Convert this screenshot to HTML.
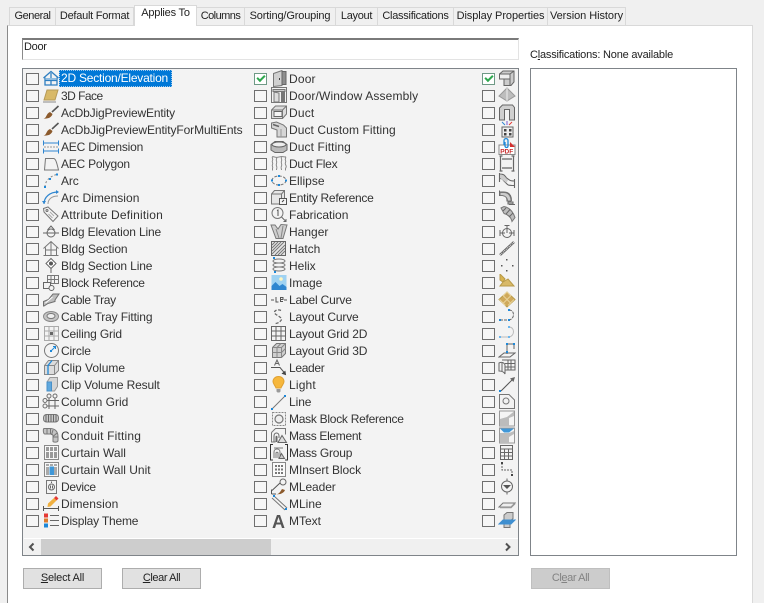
<!DOCTYPE html>
<html><head><meta charset="utf-8"><style>
html,body{margin:0;padding:0;width:764px;height:603px;overflow:hidden}
body{position:relative;background:#f0f0f0;font:11px "Liberation Sans",sans-serif;color:#2b2b2b}
.a{position:absolute;box-sizing:border-box}
.panel{left:7px;top:25px;width:746px;height:578px;background:#fff;border:1px solid #d9d9d9;border-left:1px solid #8a8a8a;border-bottom:0}
.t{position:absolute;box-sizing:border-box;top:7px;height:19px;background:#f0f0f0;border:1px solid #d9d9d9;border-left:0;line-height:16px;text-align:center;white-space:nowrap;color:#222}
.t.on{top:5px;height:21px;background:#fff;border-left:1px solid #d9d9d9;border-bottom:0;line-height:15px;z-index:2}
.list{left:22px;top:68px;width:497px;height:488px;background:#f3f3f3;border:1px solid #7f8489;overflow:hidden}
.col{position:absolute;top:1px;width:228px}
.r{position:relative;height:17px;white-space:nowrap}
.r i{position:absolute;left:3px;top:3px;width:13px;height:12px;box-sizing:border-box;border:1px solid #6f6f6f;background:#f6f6f6}
.r svg{position:absolute;left:19px;top:0;width:18px;height:17px;fill:none;stroke:#6e6e6e;stroke-width:1}
.r span{position:absolute;left:38px;top:1px;line-height:16px;color:#333;font-size:12px}
.ck{border-color:#6f9a86!important;background:#fff!important}
.ck:after{content:"";position:absolute;left:2px;top:1px;width:6px;height:3px;border-left:2px solid #2ea84e;border-bottom:2px solid #2ea84e;transform:rotate(-45deg)}
.sel{left:36px!important;top:0!important;width:113px;height:17px;line-height:16px;padding-left:2px;box-sizing:border-box;background:#0078d7;color:#fff!important;outline:1px dotted #9cc8ee;outline-offset:-1px;overflow:hidden}
.btn{top:568px;width:79px;height:21px;background:#e1e1e1;border:1px solid #adadad;text-align:center;line-height:19px;color:#222}
.sb{left:1px;top:469px;width:495px;height:17px;background:#f0f0f0;border-top:1px solid #fff}
u{text-decoration:underline}
</style></head><body>
<div class="a panel"></div>
<div class="t" style="left:9px;width:47px;border-left:1px solid #d9d9d9;letter-spacing:-.45px">General</div>
<div class="t" style="left:56px;width:78px;letter-spacing:-.25px">Default Format</div>
<div class="t on" style="left:134px;width:63px;letter-spacing:-.2px">Applies To</div>
<div class="t" style="left:197px;width:48px;letter-spacing:-.55px">Columns</div>
<div class="t" style="left:245px;width:91px;letter-spacing:-.15px">Sorting/Grouping</div>
<div class="t" style="left:336px;width:42px;letter-spacing:-.3px">Layout</div>
<div class="t" style="left:378px;width:76px;letter-spacing:-.27px">Classifications</div>
<div class="t" style="left:454px;width:94px;letter-spacing:-.08px">Display Properties</div>
<div class="t" style="left:548px;width:78px;letter-spacing:-.06px">Version History</div>

<div class="a" style="left:22px;top:38px;width:497px;height:22px;background:#fff;border:1px solid #e3e3e3;border-top:2px solid #7a7a7a;border-left:1px solid #8a8a8a;padding-left:1px;line-height:15px;color:#222;letter-spacing:-.3px">Door</div>
<div class="a" style="left:530px;top:47px;line-height:16px;color:#222;letter-spacing:-.2px">C<u>l</u>assifications: None available</div>
<div class="a" style="left:530px;top:68px;width:207px;height:488px;background:#fff;border:1px solid #7f8489"></div>

<div class="a list">
<div class="col" style="left:0">
<div class="r"><i></i><svg viewBox="0 0 18 17"><path d="M1.500 8L9 1.500 16.500 8M3 7.500v7.500h12V7.500M3 10.500h12M9 3v12" stroke="#2f7fc1" stroke-width="1.300"/><path d="M4 8h10v2H4z" fill="#8dbbe0" stroke="none"/></svg><span class="sel" style="letter-spacing:-.22px">2D Section/Elevation</span></div>
<div class="r"><i></i><svg viewBox="0 0 18 17"><path d="M5 3h11l-3 10H2z" fill="#d8b968" stroke="#b59a58"/><path d="M1 15h13" stroke="#888"/></svg><span style="letter-spacing:-.53px">3D Face</span></div>
<div class="r"><i></i><svg viewBox="0 0 18 17"><path d="M16.500 2L10 8" stroke="#555" stroke-width="1.600"/><path d="M1.500 14.500c3 0 2.500-5 6.500-6.500l2.500 2c-1 3.500-4.500 5-9 4.500z" fill="#8c5a2c" stroke="none"/></svg><span style="letter-spacing:-.17px">AcDbJigPreviewEntity</span></div>
<div class="r"><i></i><svg viewBox="0 0 18 17"><path d="M16.500 2L10 8" stroke="#555" stroke-width="1.600"/><path d="M1.500 14.500c3 0 2.500-5 6.500-6.500l2.500 2c-1 3.500-4.500 5-9 4.500z" fill="#8c5a2c" stroke="none"/></svg><span style="letter-spacing:-.1px">AcDbJigPreviewEntityForMultiEnts</span></div>
<div class="r"><i></i><svg viewBox="0 0 18 17"><path d="M1.500 5h15M1.500 13h15M1.500 2.500v5M16.500 2.500v5M1.500 10.500v5M16.500 10.500v5" stroke="#2f86d0"/><path d="M2 9h14" stroke="#999" stroke-dasharray="2 1"/></svg><span style="letter-spacing:-.2px">AEC Dimension</span></div>
<div class="r"><i></i><svg viewBox="0 0 18 17"><path d="M2.500 15L3.500 3.500h8c2 0 3 3 5 11.500z" stroke="#777"/></svg><span style="letter-spacing:-.23px">AEC Polygon</span></div>
<div class="r"><i></i><svg viewBox="0 0 18 17"><path d="M3 15C3 9 8 4 15 2.500" stroke="#888" stroke-dasharray="2 2"/><path d="M2 14h2v2H2zM7 6h2v2H7zM14 1.500h2v2h-2z" fill="#1e88d8" stroke="none"/></svg><span style="letter-spacing:-.1px">Arc</span></div>
<div class="r"><i></i><svg viewBox="0 0 18 17"><path d="M2 15C2 8 8 3 16 3" stroke="#2f86d0" stroke-width="1.200"/><path d="M6 15c0-5 4-8 10-8" stroke="#999"/><path d="M0 12h4l-2 3zM14 1l3 2-3 2z" fill="#2f86d0" stroke="none"/></svg><span style="letter-spacing:.03px">Arc Dimension</span></div>
<div class="r"><i></i><svg viewBox="0 0 18 17"><path d="M1.500 2.500L6 1l10 9-5 5.500L2 6z" stroke="#777"/><circle cx="5" cy="4.500" r="1"/><path d="M8 6l4 4M6.500 8l4 4" stroke="#aaa"/></svg><span style="letter-spacing:.2px">Attribute Definition</span></div>
<div class="r"><i></i><svg viewBox="0 0 18 17"><path d="M1 10h16" stroke="#666"/><circle cx="9" cy="10" r="4" stroke="#666"/><path d="M5.500 7L9 3l3.500 4" stroke="#666"/></svg><span style="letter-spacing:-.14px">Bldg Elevation Line</span></div>
<div class="r"><i></i><svg viewBox="0 0 18 17"><path d="M1.500 8.500L9 1.500l7.500 7M3.500 7.500v8M14.500 7.500v8M9 2v13.500M3.500 10h11M1.500 15.500h15" stroke="#777"/></svg><span style="letter-spacing:-.07px">Bldg Section</span></div>
<div class="r"><i></i><svg viewBox="0 0 18 17"><path d="M9 1.500L14 6.500 9 11.500 4 6.500z" fill="#fff" stroke="#666"/><circle cx="9" cy="6.500" r="2" fill="#555" stroke="none"/><path d="M9 11.500V16" stroke="#666"/></svg><span style="letter-spacing:-.12px">Bldg Section Line</span></div>
<div class="r"><i></i><svg viewBox="0 0 18 17"><path d="M5.500 1.500h11v8h-11zM5.500 5.500h11M9 1.500v8M12.500 1.500v8" stroke="#777"/><path d="M1.500 8.500h7v6h-7z" stroke="#666" fill="#f3f3f3"/><circle cx="9.500" cy="14" r="2.500" fill="#f3f3f3" stroke="#666"/></svg><span style="letter-spacing:-.29px">Block Reference</span></div>
<div class="r"><i></i><svg viewBox="0 0 18 17"><path d="M1.500 15V10.500l5-2L11 3h6l-4 6v1.500l-7 2-4 2.500z" fill="#bdbdbd" stroke="#6f6f6f"/><path d="M3.500 12l7-6" stroke="#fff"/></svg><span style="letter-spacing:-.32px">Cable Tray</span></div>
<div class="r"><i></i><svg viewBox="0 0 18 17"><ellipse cx="9" cy="8.500" rx="7.500" ry="5" fill="#c4c4c4" stroke="#8a8a8a"/><ellipse cx="9" cy="8" rx="4" ry="2.500" fill="#eee" stroke="#777"/></svg><span style="letter-spacing:-.15px">Cable Tray Fitting</span></div>
<div class="r"><i></i><svg viewBox="0 0 18 17"><path d="M2.500 1.500h14v14h-14zM7 1.500v14M12 1.500v14M2.500 6h14M2.500 11h14" stroke="#aaa"/><path d="M8 7h3v3H8z" fill="#666" stroke="none"/></svg><span style="letter-spacing:-.15px">Ceiling Grid</span></div>
<div class="r"><i></i><svg viewBox="0 0 18 17"><circle cx="9.500" cy="8.500" r="7" stroke="#777"/><path d="M8 8h2v2H8z" fill="#1e88d8" stroke="none"/><path d="M9 9l4-4M11 4.500h2.500v2.500" stroke="#1e88d8"/></svg><span style="letter-spacing:-.15px">Circle</span></div>
<div class="r"><i></i><svg viewBox="0 0 18 17"><path d="M2.500 6.500l4-5h10v10l-4 4h-10z" fill="#dcdcdc" stroke="#888"/><path d="M2.500 6.500h10v9M12.500 6.500l4-5" stroke="#888"/><path d="M6 15.500V6.500l4-5" stroke="#1e88d8" stroke-width="1.300"/></svg><span>Clip Volume</span></div>
<div class="r"><i></i><svg viewBox="0 0 18 17"><path d="M5 6l3-4.500h7.500v9l-3 4.500H5z" fill="#d5d5d5" stroke="#999"/><path d="M5 6h4.500v9H5z" fill="#5fa8de" stroke="#4a90c8"/></svg><span style="letter-spacing:-.15px">Clip Volume Result</span></div>
<div class="r"><i></i><svg viewBox="0 0 18 17"><circle cx="7" cy="3" r="2"/><circle cx="13" cy="3" r="2"/><circle cx="3" cy="7.500" r="2"/><circle cx="3" cy="13" r="2"/><path d="M7 5v11M13 5v11M5 7.500h12M5 13h12" stroke="#666"/></svg><span>Column Grid</span></div>
<div class="r"><i></i><svg viewBox="0 0 18 17"><rect x="1.500" y="4.500" width="15" height="7.500" rx="3" fill="#c8c8c8" stroke="#777"/><path d="M4 4.500v7.500M6.500 4.500v7.500M9 4.500v7.500M11.500 4.500v7.500M14 4.500v7.500" stroke="#666"/></svg><span style="letter-spacing:.18px">Conduit</span></div>
<div class="r"><i></i><svg viewBox="0 0 18 17"><path d="M2 1.500h6c5 0 8 3 8 8v4c0 2-4 2-5 1V9c0-1-1-2-3-2H3C1 7 1 2 2 1.500z" fill="#c4c4c4" stroke="#7a7a7a"/><path d="M5 1.500V7M8.500 1.500V7M11 3l-1.500 5M15 6l-4 3.500M16 10h-5" stroke="#777"/></svg><span style="letter-spacing:.18px">Conduit Fitting</span></div>
<div class="r"><i></i><svg viewBox="0 0 18 17"><path d="M2.500 1.500h14v14h-14z" fill="#f8f8f8" stroke="#888"/><path d="M4 3h3v4H4zM8 3h3v4H8zM12 3h3v4h-3zM4 8h3v6H4zM8 8h3v6H8zM12 8h3v6h-3z" fill="#9a9a9a" stroke="none"/></svg><span>Curtain Wall</span></div>
<div class="r"><i></i><svg viewBox="0 0 18 17"><path d="M2.500 1.500h14v14h-14z" fill="#f8f8f8" stroke="#888"/><path d="M4 3h3v2H4zM8 3h3v2H8zM12 3h3v2h-3zM4 6h3v8H4zM12 6h3v8h-3z" fill="#aaa" stroke="none"/><path d="M7.500 5.500h4.500v8.500H7.500z" fill="#3f97d8" stroke="none"/></svg><span>Curtain Wall Unit</span></div>
<div class="r"><i></i><svg viewBox="0 0 18 17"><path d="M4.500 2.500h10v13h-10z" stroke="#777"/><circle cx="9.500" cy="9" r="3" stroke="#666"/><path d="M8.500 7.500v3M10.500 7.500v3" stroke="#666"/><path d="M9.500 3.500v1.500" stroke="#666"/></svg><span style="letter-spacing:-.32px">Device</span></div>
<div class="r"><i></i><svg viewBox="0 0 18 17"><path d="M1.500 11v5M16.500 11v5M1.500 13.500h15" stroke="#555"/><path d="M6 8.500l6-5.500 2.500 2.500-6 6-3 .5z" fill="#f0b040" stroke="none"/><path d="M12 3l2-2 2.500 2.500-2 2z" fill="#e53935" stroke="none"/></svg><span style="letter-spacing:.07px">Dimension</span></div>
<div class="r"><i></i><svg viewBox="0 0 18 17"><path d="M2 1.500h4v4H2z" fill="#e53935" stroke="none"/><path d="M2 6.500h4v4H2z" fill="#dd7a2c" stroke="none"/><path d="M2 11.500h4v4H2z" fill="#1e88d8" stroke="none"/><path d="M8 3.500h9M8 8.500h9M8 13.500h9" stroke="#666"/></svg><span style="letter-spacing:-.2px">Display Theme</span></div>
</div>

<div class="col" style="left:228px">
<div class="r"><i class="ck"></i><svg viewBox="0 0 18 17"><path d="M3.500 3.500L12 .5v15l-8.500 1z" fill="#d0d0d0" stroke="#777"/><path d="M12 1.500h4v13h-4z" fill="#8e8e8e" stroke="#666"/><path d="M9 8h1v2H9z" fill="#444" stroke="none"/></svg><span style="letter-spacing:.18px">Door</span></div>
<div class="r"><i></i><svg viewBox="0 0 18 17"><path d="M1.500 .5h15v15h-15z" stroke="#777"/><path d="M3 2.500h12v2H3z" fill="#ccc" stroke="#777"/><path d="M4 5l5 1v9H4z" fill="#ddd" stroke="#777"/><path d="M11 5h4v10h-4z" fill="#777" stroke="none"/></svg><span style="letter-spacing:.13px">Door/Window Assembly</span></div>
<div class="r"><i></i><svg viewBox="0 0 18 17"><path d="M1.500 6l4-4h11v8l-4 4.500h-11z" fill="#ddd" stroke="#777"/><path d="M4 7.500h8v5H4z" fill="#f5f5f5" stroke="#666"/><path d="M12.500 6l4-4M1.500 6h11v8" stroke="#777"/></svg><span style="letter-spacing:.18px">Duct</span></div>
<div class="r"><i></i><svg viewBox="0 0 18 17"><path d="M1.500 2l5-1 7 3 3 3v9H7V9L1.500 7z" fill="#d6d6d6" stroke="#777"/><path d="M3 3.500l6 2" stroke="#666" stroke-width="1.500"/><path d="M11 8v8" stroke="#999"/></svg><span style="letter-spacing:.07px">Duct Custom Fitting</span></div>
<div class="r"><i></i><svg viewBox="0 0 18 17"><path d="M1 6.500L5 3.500h8L17 6.500V12l-4 2.500H5L1 12z" fill="#bbb" stroke="#666"/><ellipse cx="9" cy="6.500" rx="7" ry="2.500" fill="#eee" stroke="#666"/></svg><span style="letter-spacing:.1px">Duct Fitting</span></div>
<div class="r"><i></i><svg viewBox="0 0 18 17"><path d="M2.500 1.500c-1 2 1 2 0 4s1 2 0 4 1 2 0 4v2M15.500 1.500c1 2-1 2 0 4s-1 2 0 4 1 2 0 4v2M6.500 2c1 2-1 2 0 4s-1 3 0 5 0 2 0 4M11.500 2c-1 2 1 2 0 4s1 3 0 5 0 2 0 4" stroke="#888"/><path d="M2.500 1.500l4 1 5-1 4 .5" stroke="#888"/></svg><span style="letter-spacing:-.26px">Duct Flex</span></div>
<div class="r"><i></i><svg viewBox="0 0 18 17"><ellipse cx="9" cy="8.500" rx="7" ry="4.500" stroke="#777" stroke-dasharray="3 1.500"/><path d="M8 3h2v2H8zM8 12h2v2H8zM1 7.500h2v2H1zM15 7.500h2v2h-2z" fill="#1e88d8" stroke="none"/></svg><span style="letter-spacing:.04px">Ellipse</span></div>
<div class="r"><i></i><svg viewBox="0 0 18 17"><path d="M1.500 5l3-3.500h10v9M1.500 5h10v10h-10zM11.500 5l3-3.500" stroke="#777" fill="#e6e6e6"/><path d="M9.500 9.500h7v6h-7z" fill="#f5f5f5" stroke="#555"/><path d="M12 13l2-2" stroke="#444"/></svg><span style="letter-spacing:-.26px">Entity Reference</span></div>
<div class="r"><i></i><svg viewBox="0 0 18 17"><circle cx="7.500" cy="7" r="5.500" stroke="#777"/><path d="M7 4.500l1-.5v6" stroke="#555"/><path d="M11.500 11l4 4M13.500 15.500h2.500V13" stroke="#666"/></svg><span>Fabrication</span></div>
<div class="r"><i></i><svg viewBox="0 0 18 17"><path d="M1 2h4l3 4 3-4.500 6 .5-4 13.500H6z" fill="#cfcfcf" stroke="#777"/><path d="M6 6l3 9M13 3l-2 12" stroke="#888"/></svg><span>Hanger</span></div>
<div class="r"><i></i><svg viewBox="0 0 18 17"><path d="M1.500 1.500h14v14h-14z" fill="#e6e6e6" stroke="#666"/><path d="M2 5l3-3M2 8l6-6M2 11l9-9M2 14l12-12M5 15l10-10M8 15l7-7M11 15l4-4" stroke="#777"/></svg><span>Hatch</span></div>
<div class="r"><i></i><svg viewBox="0 0 18 17"><ellipse cx="9" cy="4" rx="6" ry="2" stroke="#777"/><ellipse cx="9" cy="8" rx="6" ry="2" stroke="#777"/><ellipse cx="9" cy="12" rx="6" ry="2" stroke="#777"/><path d="M3 0h2v2H3zM4 14h2v2H4z" fill="#1e88d8" stroke="none"/></svg><span>Helix</span></div>
<div class="r"><i></i><svg viewBox="0 0 18 17"><path d="M1.500 1h15v15h-15z" fill="#9fd2f2" stroke="none"/><path d="M1.500 16v-4l4-4 4 4 3-2 4 3v3z" fill="#2f86d0" stroke="none"/><circle cx="11" cy="5" r="1.800" fill="#fff6c0" stroke="none"/></svg><span>Image</span></div>
<div class="r"><i></i><svg viewBox="0 0 18 17"><path d="M1 9h3M14 9h3" stroke="#555"/><path d="M6 6v5h2.500M10.500 8.500h2.500v-2h-2.500v4h2.500" stroke="#555"/></svg><span style="letter-spacing:-.18px">Label Curve</span></div>
<div class="r"><i></i><svg viewBox="0 0 18 17"><path d="M11 2.500c-4-2-9 1-5 4 3 2 8 4 4 7-1 1-3 2-5 2" stroke="#666" stroke-dasharray="3 1.500" stroke-width="1.300"/></svg><span style="letter-spacing:-.15px">Layout Curve</span></div>
<div class="r"><i></i><svg viewBox="0 0 18 17"><path d="M1.500 1.500h14v14h-14zM6 1.500v14M11 1.500v14M1.500 6h14M1.500 11h14" stroke="#666"/></svg><span style="letter-spacing:-.18px">Layout Grid 2D</span></div>
<div class="r"><i></i><svg viewBox="0 0 18 17"><path d="M2.500 5.500l4-4h9v10l-4 4h-9z" fill="#cfcfcf" stroke="#777"/><path d="M2.500 5.500h9v10M11.500 5.500l4-4M7 5.500v10M2.500 10.500h9M7 5.500l4-4M11.500 10.500l4-4" stroke="#888"/></svg><span style="letter-spacing:-.18px">Layout Grid 3D</span></div>
<div class="r"><i></i><svg viewBox="0 0 18 17"><path d="M1 8.500h9l5 6" stroke="#555"/><path d="M12.500 14.500l3 1-.5-3z" fill="#444" stroke="#444"/><path d="M4.500 6.500L7 1l2.500 5.500M5.500 4.500h3" stroke="#666"/></svg><span style="letter-spacing:-.32px">Leader</span></div>
<div class="r"><i></i><svg viewBox="0 0 18 17"><path d="M8.500.5c3.500 0 5.500 2.500 5.500 5 0 2.500-2 3.500-3 6.500H6C5 9 3 8 3 5.500c0-2.500 2-5 5.500-5z" fill="#f6b73c" stroke="#e0a030"/><path d="M6.500 13h4v2.500l-1 1h-2l-1-1z" fill="#999" stroke="none"/></svg><span style="letter-spacing:.18px">Light</span></div>
<div class="r"><i></i><svg viewBox="0 0 18 17"><path d="M2 16L15 3" stroke="#777"/><path d="M1 15h2v2H1zM14 2h2v2h-2z" fill="#1e88d8" stroke="none"/></svg><span style="letter-spacing:-.07px">Line</span></div>
<div class="r"><i></i><svg viewBox="0 0 18 17"><path d="M2.500 2.500h13v13h-13z" stroke="#888" stroke-dasharray="2 1"/><circle cx="9" cy="9" r="4" fill="#eee" stroke="#777" stroke-width="1.200"/></svg><span style="letter-spacing:-.27px">Mask Block Reference</span></div>
<div class="r"><i></i><svg viewBox="0 0 18 17"><path d="M1.500 5.500l4-4h10v6M1.500 5.500v9.500h4" stroke="#777"/><path d="M4 15V9c0-4 5-4 5 0v2M6 15v-5c0-1 1-1 1 0v5" stroke="#666"/><path d="M8 15.500l4-7 4.500 7z" fill="#ddd" stroke="#666"/></svg><span style="letter-spacing:-.32px">Mass Element</span></div>
<div class="r"><i></i><svg viewBox="0 0 18 17"><path d="M3 .5H.5v15.500H3M15 .5h2.500v15.500H15" stroke="#333"/><path d="M4 4h9M4 14V8c0-4 6-4 6 0v6M6 14V9c0-1 2-1 2 0v5" stroke="#777"/><path d="M9 14.500l2.500-5 3 5z" fill="#ccc" stroke="#666"/></svg><span style="letter-spacing:-.22px">Mass Group</span></div>
<div class="r"><i></i><svg viewBox="0 0 18 17"><path d="M2.500 1.500h13v14h-13z" fill="#fafafa" stroke="#888"/><path d="M5 4h2v2H5zM8 4h2v2H8zM11 4h2v2h-2zM5 7.500h2v2H5zM8 7.500h2v2H8zM11 7.500h2v2h-2zM5 11h2v2H5zM8 11h2v2H8zM11 11h2v2h-2z" fill="#777" stroke="none"/></svg><span style="letter-spacing:-.05px">MInsert Block</span></div>
<div class="r"><i></i><svg viewBox="0 0 18 17"><circle cx="13" cy="4" r="3" stroke="#666"/><path d="M10 5L2 12.500M1.500 16V11.500M1.500 16H6" stroke="#555"/><path d="M6 16c3 .5 4-2 6-5l3 1c-1 3-5 5-9 4z" fill="#8c5a2c" stroke="none"/></svg><span style="letter-spacing:-.1px">MLeader</span></div>
<div class="r"><i></i><svg viewBox="0 0 18 17"><path d="M2 3l13 12M4 1l13 12" stroke="#777"/><path d="M3 0h2v2H3zM15 13h2v2h-2z" fill="#1e88d8" stroke="none"/></svg><span>MLine</span></div>
<div class="r"><i></i><svg viewBox="0 0 18 17"><text x="2" y="16" style="font:bold 18px 'Liberation Sans',sans-serif;fill:#555;stroke:none">A</text></svg><span>MText</span></div>
</div>

<div class="col" style="left:456px">
<div class="r"><i class="ck"></i><svg viewBox="0 0 18 17"><path d="M1.500 4L5 1h11v11l-3 3.500H6V9H1.500z" fill="#ccc" stroke="#666"/><path d="M1.500 4H12v5H1.500zM12 4l4-3M6 9v6.500M12 9v6" stroke="#666" fill="#eee"/></svg></div>
<div class="r"><i></i><svg viewBox="0 0 18 17"><path d="M9 1L17 9 9 14 1 9z" fill="#bdbdbd" stroke="#999"/><path d="M9 1v13" stroke="#eee"/></svg></div>
<div class="r"><i></i><svg viewBox="0 0 18 17"><path d="M1.500 16V4l3-3h10l2 2.500V16h-5V5.500h-5V16z" fill="#d0d0d0" stroke="#666"/></svg></div>
<div class="r"><i></i><svg viewBox="0 0 18 17"><path d="M4 1l3 3" stroke="#2f86d0"/><path d="M9 0v4" stroke="#7b5bd0"/><path d="M14 1l-3 3" stroke="#e53935"/><path d="M4 6h11v10H4z" fill="#eee" stroke="#666"/><path d="M6 8h2.500v2.500H6zM11 8h2.500v2.500H11zM6 12h2.500v2.500H6zM11 12h2.500v2.500H11z" fill="#444" stroke="none"/></svg></div>
<div class="r"><i></i><svg viewBox="0 0 18 17"><path d="M1 7h16v9.500H1z" fill="#fff" stroke="#888"/><path d="M6 7V2.500c0-2.500 4-2.500 4 0V8c0 2-3 2-3 0V4" stroke="#1e88d8" stroke-width="1.300"/><path d="M12 9V4l5 5z" fill="#d32f2f" stroke="none"/><text x="2.200" y="15.500" style="font:bold 6.500px 'Liberation Sans',sans-serif;fill:#c62828;stroke:none">PDF</text></svg></div>
<div class="r"><i></i><svg viewBox="0 0 18 17"><path d="M2.500 1v15M15.500 1v15M1.500 1h3M13.500 1h3M1.500 16h3M13.500 16h3M4 4h10M4 13h10" stroke="#666" stroke-width="1.200"/></svg></div>
<div class="r"><i></i><svg viewBox="0 0 18 17"><path d="M1.500 1v9M1.500 2c4 0 5 1 7 4l3 2c1 1 3 1 5 1M16.500 7v9M1.500 6.500c3 0 3 1 5 3l3 3c1 1 3 1 7 1" stroke="#666" stroke-width="1.100"/><path d="M2 3h3l5 5-1.500 3L6 9 2 6z" fill="#ccc" stroke="none"/></svg></div>
<div class="r"><i></i><svg viewBox="0 0 18 17"><path d="M1.500 1.500V7M1.500 3h4c5 0 8 3 8 9M11 15.500h6M2 6.500h3c3 0 4 2 4 6" stroke="#666"/><path d="M2 3.500h4c4 0 7 3 7 8.500H9.500c0-3-2-5-5-5.500H2z" fill="#ccc" stroke="#777"/><path d="M10 13h5v2h-5z" fill="#ccc" stroke="#666"/></svg></div>
<div class="r"><i></i><svg viewBox="0 0 18 17"><path d="M3 2l3-1.500c5 1 9 5 11 11L14 15.500c-1-4-4-7-8-8z" fill="#bdbdbd" stroke="#777"/><path d="M5 5l3-3M8 8l4-4.500M11 11l4-4" stroke="#666"/></svg></div>
<div class="r"><i></i><svg viewBox="0 0 18 17"><circle cx="9" cy="10" r="4.500" stroke="#666"/><path d="M2 7v6M16 7v6M2 10h5M11 10h5M9 10V2.500M6.500 2.500h5" stroke="#666"/></svg></div>
<div class="r"><i></i><svg viewBox="0 0 18 17"><path d="M2 15L16 2" stroke="#666" stroke-width="2.500"/><path d="M2 15L16 2" stroke="#eee" stroke-width="1" stroke-dasharray="1 1"/></svg></div>
<div class="r"><i></i><svg viewBox="0 0 18 17"><path d="M8 2h1.500v1.500H8zM3 8h1.500v1.500H3zM14 8h1.500v1.500H14zM8 13h1.500v1.500H8z" fill="#555" stroke="none"/></svg></div>
<div class="r"><i></i><svg viewBox="0 0 18 17"><path d="M2 0l5 5-2 3L2 6z" fill="#d8b450" stroke="#b89a48"/><path d="M5 8l5-3 6 7H2z" fill="#d8b968" stroke="#b89a48"/></svg></div>
<div class="r"><i></i><svg viewBox="0 0 18 17"><path d="M9 1l8 7.500-8 7.500-8-7.500z" fill="#cfa95a" stroke="#b89a48"/><path d="M5 4.500l8 8M9 1l4 4M1.500 8.500l6 6M13 4.500l-8 8M9 1L5 5M16 8.500l-6 6" stroke="#e8d298"/></svg></div>
<div class="r"><i></i><svg viewBox="0 0 18 17"><path d="M2 12h9M11 2c6 0 6 9 0 10" stroke="#666" stroke-dasharray="3 1"/><path d="M1 11h2v2H1zM10 1h2v2h-2zM10 11h2v2h-2z" fill="#1e88d8" stroke="none"/></svg></div>
<div class="r"><i></i><svg viewBox="0 0 18 17"><path d="M2 12h9M11 2c6 0 6 9 0 10" stroke="#bbb"/><path d="M1 11h2v2H1zM10 1h2v2h-2zM10 11h2v2h-2z" fill="#6db6ec" stroke="none"/></svg></div>
<div class="r"><i></i><svg viewBox="0 0 18 17"><path d="M1 15l5-4h11l-5 4zM9 12V2h7v5" stroke="#666"/><path d="M8 1h2v2H8zM15 1h2v2h-2zM8 9h2v2H8z" fill="#1e88d8" stroke="none"/></svg></div>
<div class="r"><i></i><svg viewBox="0 0 18 17"><path d="M1 12c3 0 5 1 6 3V6C6 3 3 3 1 4zM4 1h13v10H7M7 4.500h10M7 8h10M10 1v10M13 1v10M4 4v8" stroke="#666"/></svg></div>
<div class="r"><i></i><svg viewBox="0 0 18 17"><path d="M3 15L15 3" stroke="#555"/><path d="M17 1l-5 1.500 3.500 3.500z" fill="#666" stroke="none"/><path d="M1 14h2v2H1z" fill="#1e88d8" stroke="none"/></svg></div>
<div class="r"><i></i><svg viewBox="0 0 18 17"><path d="M1.500 1.500H11l5.500 5.500v8.500H1.500z" stroke="#777"/><circle cx="8" cy="8" r="3" stroke="#777"/></svg></div>
<div class="r"><i></i><svg viewBox="0 0 18 17"><path d="M1.500 1h15v15h-15z" fill="#f5f5f5" stroke="#999"/><path d="M16 1.500V6L11 8v8H2V9l7-2z" fill="#bcbcbc" stroke="none"/></svg></div>
<div class="r"><i></i><svg viewBox="0 0 18 17"><path d="M1.500 1h15v15h-15z" fill="#f5f5f5" stroke="#999"/><path d="M2 1.500h14l-5 4H6z" fill="#3f97d8" stroke="none"/><path d="M2 6h9v10H2zM11 6l5-2v3l-5 3z" fill="#bcbcbc" stroke="none"/></svg></div>
<div class="r"><i></i><svg viewBox="0 0 18 17"><path d="M2.500 1.500h12v14h-12zM2.500 5h12M2.500 8.500h12M2.500 12h12M6.500 5v10.500M10.500 5v10.500" stroke="#666"/></svg></div>
<div class="r"><i></i><svg viewBox="0 0 18 17"><path d="M4 2v7h10v6" stroke="#666" stroke-dasharray="2 1"/><path d="M3 1h2v2H3zM13 13h2v2h-2z" fill="#444" stroke="none"/></svg></div>
<div class="r"><i></i><svg viewBox="0 0 18 17"><path d="M9 .5v16" stroke="#666"/><circle cx="9" cy="8.500" r="5.500" fill="#f3f3f3" stroke="#666"/><path d="M5 7h8l-4 4z" fill="#555" stroke="none"/></svg></div>
<div class="r"><i></i><svg viewBox="0 0 18 17"><path d="M1 12l4-4h12l-4 4z" fill="#eee" stroke="#777"/><path d="M2 12.500h11l4-4" stroke="#999" stroke-width="1.500"/></svg></div>
<div class="r"><i></i><svg viewBox="0 0 18 17"><path d="M6 3l3-2.500h6v6l-3 3v6H6z" fill="#ccc" stroke="#777"/><path d="M1 12l4-4h12l-4 4z" fill="#3f8fd0" stroke="#3f8fd0"/></svg></div>
</div>

<div class="a sb">
<div class="a" style="left:17px;top:0;width:230px;height:16px;background:#cdcdcd"></div>
<svg class="a" style="left:3px;top:3px" width="10" height="10" viewBox="0 0 10 10"><path d="M6.500 1.500L3 5l3.500 3.500" fill="none" stroke="#505050" stroke-width="2"/></svg>
<svg class="a" style="left:479px;top:3px" width="10" height="10" viewBox="0 0 10 10"><path d="M3 1.500L6.500 5 3 8.500" fill="none" stroke="#505050" stroke-width="2"/></svg>
</div>
</div>

<div class="a btn" style="left:23px;letter-spacing:-.2px"><u>S</u>elect All</div>
<div class="a btn" style="left:122px;letter-spacing:-.4px"><u>C</u>lear All</div>
<div class="a btn" style="left:531px;background:#ccc;border-color:#bfbfbf;color:#838383;letter-spacing:-.4px">Cl<u>e</u>ar All</div>
</body></html>
